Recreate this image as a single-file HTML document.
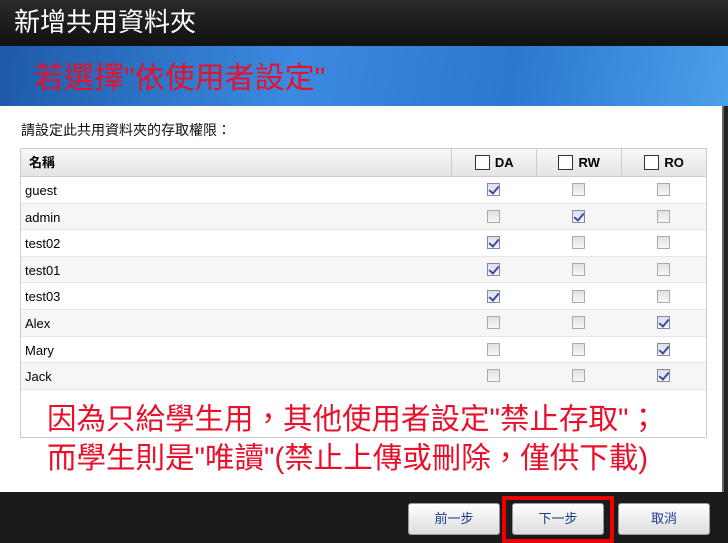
<!DOCTYPE html>
<html><head><meta charset="utf-8"><style>
*{margin:0;padding:0;box-sizing:border-box}
body{width:728px;height:543px;overflow:hidden;background:#222;font-family:"Liberation Sans","Noto Sans CJK TC",sans-serif;position:relative}
.title{position:absolute;left:0;top:0;width:728px;height:46px;background:linear-gradient(#2a2a2a,#111);color:#fff;font-size:26px;line-height:44px;padding-left:14px}
.band{position:absolute;left:0;top:46px;width:728px;height:60px;background:linear-gradient(100deg,#1d5aa8,#3b8ae0 40%,#2a78d0 70%,#4aa0e8);}
.band span{position:absolute;left:34px;top:16px;color:#e8102a;font-size:30px;line-height:34px}
.body{position:absolute;left:0;top:106px;width:724px;height:386px;background:#fff;border-right:2px solid #666}
.lbl{position:absolute;left:21px;top:14px;font-size:14px;color:#111}
.tbl{position:absolute;left:20px;top:42px;width:687px;height:290px;border:1px solid #ccc}
.hdr{height:28px;background:linear-gradient(#f8f8f8,#e4e4e4);border-bottom:1px solid #ccc;display:flex;font-size:13px;font-weight:bold}
.c0{width:431px;padding-left:4px;line-height:27px}
.c{width:85px;border-left:1px solid #ccc;display:flex;align-items:center;justify-content:center}
.hb{display:inline-block;width:15px;height:15px;border:1px solid #333;background:#fff;margin-right:5px}
.row{height:26.6px;display:flex;font-size:13px;border-bottom:1px solid #e6e6e6}
.row .c{border-left:none}
.cb{width:13px;height:13px;border:1px solid #aaa;background:linear-gradient(#e0e0e0,#f8f8f8);position:relative}
.cb.k{border-color:#889;background:linear-gradient(#dde,#f6f6ff)}
.cb.k:after{content:"";position:absolute;left:3px;top:0px;width:4px;height:8px;border:solid #3550a0;border-width:0 2px 2px 0;transform:rotate(40deg)}
.red{position:absolute;left:47px;color:#e8102a;font-size:29.5px;line-height:34px;white-space:nowrap}
.foot{position:absolute;left:0;top:492px;width:728px;height:51px;background:#1b1b1b}
.btn{position:absolute;top:11px;width:92px;height:32px;border-radius:3px;background:linear-gradient(#fff,#ddd);border:1px solid #999;color:#1a3a8a;font-size:13px;text-align:center;line-height:30px}
.hl{position:absolute;left:502px;top:4px;width:112px;height:47px;border:4px solid #e00}
</style></head><body>
<div class="title">新增共用資料夾</div>
<div class="band"><span>若選擇"依使用者設定"</span></div>
<div class="body">
<div class="lbl">請設定此共用資料夾的存取權限：</div>
<div class="tbl">
<div class="hdr"><div class="c0" style="padding-left:8px">名稱</div><div class="c"><span class="hb"></span>DA</div><div class="c"><span class="hb"></span>RW</div><div class="c"><span class="hb"></span>RO</div></div>
<div>
<div class="row" style="background:#fff"><div class="c0" style="line-height:27px">guest</div><div class="c"><i class="cb k"></i></div><div class="c"><i class="cb"></i></div><div class="c"><i class="cb"></i></div></div>
<div class="row" style="background:#f6f6f6"><div class="c0" style="line-height:27px">admin</div><div class="c"><i class="cb"></i></div><div class="c"><i class="cb k"></i></div><div class="c"><i class="cb"></i></div></div>
<div class="row" style="background:#fff"><div class="c0" style="line-height:27px">test02</div><div class="c"><i class="cb k"></i></div><div class="c"><i class="cb"></i></div><div class="c"><i class="cb"></i></div></div>
<div class="row" style="background:#f6f6f6"><div class="c0" style="line-height:27px">test01</div><div class="c"><i class="cb k"></i></div><div class="c"><i class="cb"></i></div><div class="c"><i class="cb"></i></div></div>
<div class="row" style="background:#fff"><div class="c0" style="line-height:27px">test03</div><div class="c"><i class="cb k"></i></div><div class="c"><i class="cb"></i></div><div class="c"><i class="cb"></i></div></div>
<div class="row" style="background:#f6f6f6"><div class="c0" style="line-height:27px">Alex</div><div class="c"><i class="cb"></i></div><div class="c"><i class="cb"></i></div><div class="c"><i class="cb k"></i></div></div>
<div class="row" style="background:#fff"><div class="c0" style="line-height:27px">Mary</div><div class="c"><i class="cb"></i></div><div class="c"><i class="cb"></i></div><div class="c"><i class="cb k"></i></div></div>
<div class="row" style="background:#f6f6f6"><div class="c0" style="line-height:27px">Jack</div><div class="c"><i class="cb"></i></div><div class="c"><i class="cb"></i></div><div class="c"><i class="cb k"></i></div></div>
</div>
</div>
<div class="red" style="top:297px">因為只給學生用，其他使用者設定"禁止存取"；</div>
<div class="red" style="top:336px">而學生則是"唯讀"(禁止上傳或刪除，僅供下載)</div>
</div>
<div class="foot">
<div class="btn" style="left:408px">前一步</div>
<div class="btn" style="left:512px">下一步</div>
<div class="btn" style="left:618px">取消</div>
<div class="hl"></div>
</div>
</body></html>
